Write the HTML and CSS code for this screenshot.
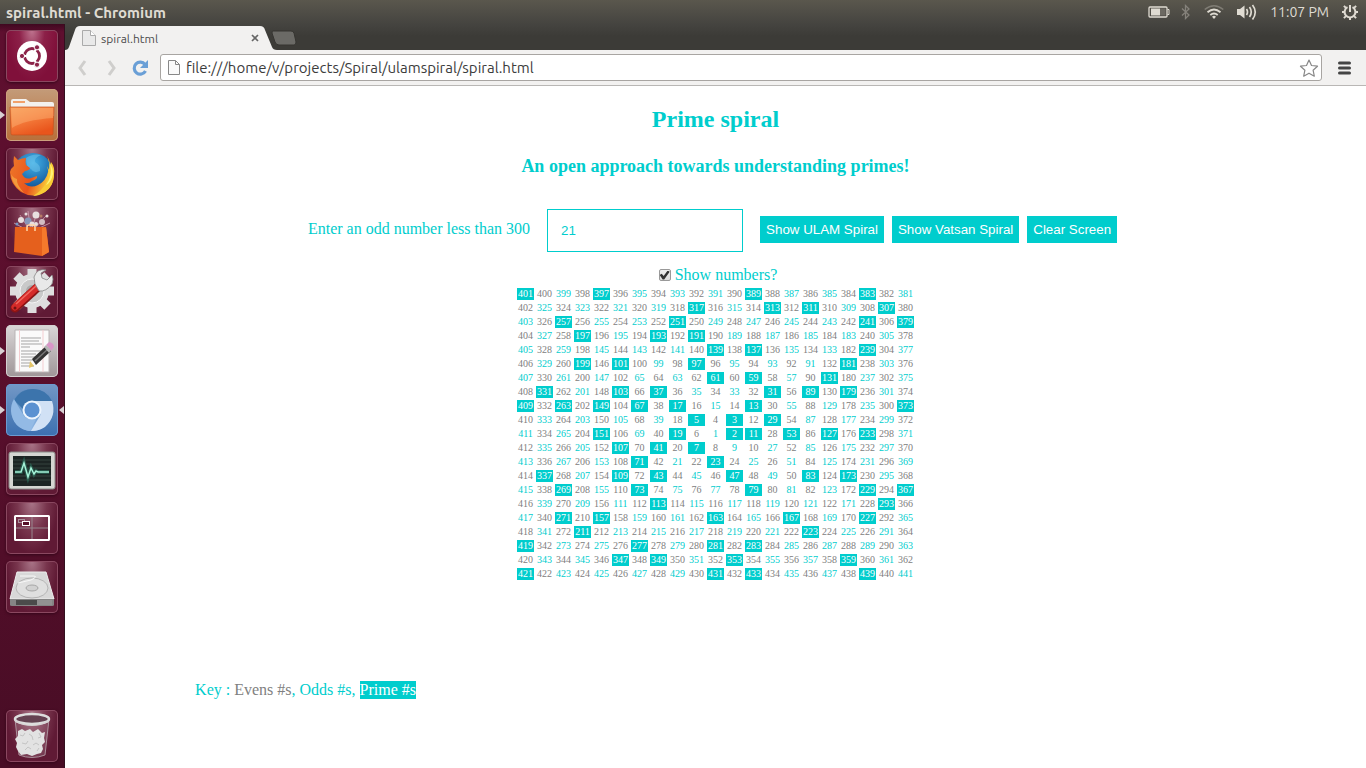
FILE: index.html
```
<!DOCTYPE html>
<html lang="en">
<head>
<meta charset="utf-8">
<title>spiral.html - Chromium</title>
<link rel="stylesheet" href="styles.css">
</head>
<body class="desktop">
<header class="panel">
  <span class="panel-title">spiral.html - Chromium</span>
  <div class="indicators">
    <svg class="battery" width="22" height="14" viewBox="0 0 22 14"><rect x="1" y="2" width="18" height="10" rx="1" fill="none" stroke="#dfdbd2" stroke-width="1.3"/><rect x="3" y="3.5" width="9" height="7" fill="#dfdbd2"/><rect x="12" y="3.5" width="5.5" height="7" fill="#6c6962"/><path d="M19.5 4.5h1.5v5h-1.5" fill="none" stroke="#dfdbd2"/></svg>
    <svg class="bluetooth" width="10" height="16" viewBox="0 0 10 16"><path d="M1 4.5l7 6.5-3.500 3.500V1.500L8 5 1 11.500" fill="none" stroke="#85827b" stroke-width="1.300"/></svg>
    <svg class="wifi" width="20" height="16" viewBox="0 0 20 16"><path d="M.7 5.500Q10-2 19.300 5.500" fill="none" stroke="#7f7c74" stroke-width="1.600"/><path d="M3.500 8.300Q10 2.800 16.500 8.300M6.300 11Q10 8 13.700 11" fill="none" stroke="#dfdbd2" stroke-width="1.800"/><path d="M8 12.700Q10 11 12 12.700L10 15z" fill="#dfdbd2"/></svg>
    <svg class="sound" width="20" height="18" viewBox="0 0 20 18"><path d="M0 6h3l4.500-3.500v13L3 12H0z" fill="#dfdbd2"/><path d="M9.500 6Q11.500 9 9.500 12M12.500 4Q16 9 12.500 14M15.500 2Q21 9 15.500 16.500" fill="none" stroke="#dfdbd2" stroke-width="1.700"/></svg>
    <span class="clock">11:07 PM</span>
    <svg class="power" width="16" height="16" viewBox="0 0 16 16"><path d="M5.500 3.200A5.400 5.400 0 1 0 10.500 3.200" fill="none" stroke="#dfdbd2" stroke-width="2"/><path d="M8 1v7M1.900 1.900l2 2M14.100 1.900l-2 2M0 8h3M13 8h3M1.900 14.100l2-2M14.100 14.100l-2-2M8 13v3" stroke="#dfdbd2" stroke-width="2"/></svg>
  </div>
</header>
<div class="workspace">
<svg class="defs" width="0" height="0" aria-hidden="true"><defs>
  <linearGradient id="orange" x2="0.500" y2="1"><stop stop-color="#f79a55"/><stop offset=".5" stop-color="#f47c3c"/><stop offset="1" stop-color="#e9551c"/></linearGradient>
  <radialGradient id="globe" cx=".5" cy=".25" r=".8"><stop stop-color="#45b3e8"/><stop offset=".6" stop-color="#1c6bad"/><stop offset="1" stop-color="#123a78"/></radialGradient>
  <linearGradient id="fox" x2="1" y2="0.300"><stop stop-color="#ee7a2a"/><stop offset=".6" stop-color="#e9541c"/><stop offset="1" stop-color="#fbd23c"/></linearGradient>
  <linearGradient id="chrome" x2="0" y2="1"><stop stop-color="#4b80b5"/><stop offset="1" stop-color="#91b8e6"/></linearGradient>
</defs></svg>
<nav class="launcher" aria-label="Launcher">
  <button class="tile tile-home" aria-label="Dash"><svg viewBox="0 0 52 52"><circle cx="26" cy="26" r="15" fill="#fff"/><circle cx="26" cy="26" r="7.500" fill="none" stroke="#8c2349" stroke-width="2.800"/><path d="M26 26L16 26M26 26L31 17.300M26 26L31 34.700" stroke="#fff" stroke-width="2"/><circle cx="26" cy="26" r="5.500" fill="#fff"/><g fill="#8c2349" stroke="#fff" stroke-width="1"><circle cx="16" cy="26" r="2.600"/><circle cx="31" cy="17.300" r="2.600"/><circle cx="31" cy="34.700" r="2.600"/></g></svg></button>
  <button class="tile tile-files running" aria-label="Files"><svg viewBox="0 0 52 52"><path d="M5 12q0-2 2-2h13l4 3h22q2 0 2 2v12H5z" fill="#f3f1ee"/><path d="M7 12h12v2H7z" fill="#f1a16b"/><path d="M4 18h44l-1 27q0 1-2 1H7q-2 0-2-1z" fill="url(#orange)" stroke="#c4501c" stroke-width=".7"/><path d="M5 19h42v10Q18 31 6 39z" fill="#ffc68a" opacity=".35"/></svg></button>
  <button class="tile" aria-label="Firefox"><svg viewBox="0 0 52 52"><circle cx="27" cy="25" r="20" fill="url(#globe)"/><path d="M20 10q7-5 15-3-7 3-6 7 6 3 5 9-6 3-9-2-5-1-5-11" fill="#72c6eb" opacity=".5"/><path d="M8 8l4 4q4-2 8-2-1 4 0 7l4 3q0 2-5 3l-3 3q3 6 9 4l6-2q1 3-5 5-3 3-8 2 6 6 14 2 8-4 10-13l6-2q1 15-9 22-12 7-24 0Q4 36 4 24q1-4 4-6-1-5 0-10z" fill="url(#fox)"/><path d="M41 8q3 4 3 9l1-3q4 5 3 12 0 12-9 18-6 4-12 4 10-6 13-13 4-9 1-17l2 4q1-8-2-14z" fill="#f9cb35"/><path d="M44 16q3 12-4 21 5-2 7-11 0-6-3-10z" fill="#fff176"/><path d="M5 26q1 12 13 19-8-9-7-14-4-1-6-5z" fill="#f39a3d"/></svg></button>
  <button class="tile" aria-label="Software Center"><svg viewBox="0 0 52 52"><g stroke="#d6a3b5" stroke-width=".8"><path d="M25 25L8 16M25 25L14 8M25 25L22 4M25 25L31 5M25 25L40 9M25 25L44 16"/></g><g fill="#e8dfdf"><circle cx="15" cy="13" r="3"/><circle cx="22" cy="14" r="3.500" fill="#8797b8"/><circle cx="30" cy="8" r="3.500"/><circle cx="36" cy="15" r="3" fill="#d3bdc3"/><circle cx="41" cy="9" r="1.500"/><circle cx="26" cy="17" r="2.500"/><circle cx="20" cy="7" r="1.500"/><circle cx="11" cy="17" r="1.500" fill="#7798c4"/><circle cx="30" cy="17" r="2"/><circle cx="35" cy="9" r="1.500" fill="#b67a65"/></g><path d="M9 20l31 0 3 25-7 4-28-4z" fill="#e5601d"/><path d="M40 20l3 25-7 4 0-28z" fill="#f4792c"/><path d="M21 24v-4q0-2 2-2h4q2 0 2 2v4" fill="none" stroke="#ffd6a8" stroke-width="1.500"/></svg></button>
  <button class="tile" aria-label="System Settings"><svg viewBox="0 0 52 52"><g fill="#dedede"><circle cx="26" cy="25" r="17"/><g stroke="#dedede" stroke-width="9"><path d="M26 3v44M4 25h44M10.500 9.500l31 31M41.500 9.500l-31 31"/></g></g><circle cx="26" cy="25" r="12" fill="#c9c9c9" stroke="#f3f3f3"/><circle cx="26" cy="25" r="6" fill="#aaa"/><path d="M9 42L33 20" stroke="#8d1414" stroke-width="9" stroke-linecap="round"/><path d="M9 41L32 20" stroke="#d52b29" stroke-width="7" stroke-linecap="round"/><path d="M10 38L30 20" stroke="#f26a60" stroke-width="1.500"/><path d="M29 18l4 7q7 1 13-7 2-5 0-9l-5 5-5-2-1-5 5-3q-9-2-12 7z" fill="#e9e9e9" stroke="#888" stroke-width=".8"/><circle cx="9" cy="42" r="1.500" fill="#741212"/></svg></button>
  <button class="tile tile-editor running" aria-label="Text Editor"><svg viewBox="0 0 52 52"><path d="M9 5h34v42H9z" fill="#fafafa" stroke="#b9b4b5"/><path d="M13.500 5v42M37 5v42" stroke="#f4cdd0"/><path d="M15 13h20M15 16h18M15 19h21M15 22h9M15 26h20M15 29h15M15 32h17M15 35h13M15 38h10M15 41h13" stroke="#a5a5a5"/><path d="M24 36l4 5-5 2z" fill="#e3c568"/><path d="M26 34L40 21l5 5-15 14z" fill="#343434"/><path d="M29 36L42 24" stroke="#777" stroke-width="1.500"/><path d="M40 20l3-3q5 1 5 5l-3 4z" fill="#d996c7"/><path d="M38 22l2-2 5 5-2 3z" fill="#b5b5b5"/></svg></button>
  <button class="tile tile-chromium running focused" aria-label="Chromium"><svg viewBox="0 0 52 52"><circle cx="26" cy="26" r="21" fill="url(#chrome)"/><path d="M8 16Q15 5 27 5q13 0 19 12H26q-7 0-9 8z" fill="#3c74ac"/><path d="M26 17h20q5 15-7 26-6 4-14 4l10-17z" fill="#d1e1f5"/><path d="M8 15l10 17q4 4 12 3l-6 12Q7 45 5 27q0-7 3-12z" fill="#93bae5"/><circle cx="26" cy="26" r="9.500" fill="#eef5fd"/><circle cx="26" cy="26" r="7.500" fill="#5b91d1"/></svg></button>
  <button class="tile" aria-label="System Monitor"><svg viewBox="0 0 52 52"><rect x="3" y="9" width="46" height="37" rx="2" fill="#d5d6d2" stroke="#8a8b88"/><rect x="7" y="13" width="38" height="30" fill="#1c2423"/><path d="M7 17h38M7 21h38M7 25h38M7 33h38M7 37h38" stroke="#35423e"/><path d="M9 29h6l3-9 4 14 3-9 3 6 2-3 2 1h11" fill="none" stroke="#2b725d" stroke-width="4" opacity=".6"/><path d="M9 29h6l3-9 4 14 3-9 3 6 2-3 2 1h11" fill="none" stroke="#a4f2d7" stroke-width="1.500"/></svg></button>
  <button class="tile" aria-label="Workspace Switcher"><svg viewBox="0 0 52 52"><path d="M26 14v24M9 26h34" stroke="#97858d"/><rect x="9" y="14" width="34" height="24" rx=".5" fill="none" stroke="#fff" stroke-width="2"/><rect x="12.500" y="17.500" width="6" height="3" fill="none" stroke="#a8929d"/><rect x="16.500" y="19.500" width="7" height="4" fill="#551129" stroke="#fff"/></svg></button>
  <button class="tile" aria-label="Disk"><svg viewBox="0 0 52 52"><path d="M11 11h29l8 27H4z" fill="#d8d8d8" stroke="#eee"/><path d="M4 38h44v6q0 1-2 1H6q-2 0-2-1z" fill="#858585"/><path d="M10 39h33v5H10z" fill="#4b4b4b"/><path d="M31 39h15v5H31z" fill="#929292"/><ellipse cx="26" cy="27" rx="16" ry="10" fill="#dfdfdf" stroke="#aaa" stroke-width=".8"/><ellipse cx="26" cy="27" rx="6" ry="3" fill="#d1d1d1" stroke="#999" stroke-width=".8"/><path d="M14 15h13q6 0-2 4l-13 3" fill="none" stroke="#f7f7f7"/></svg></button>
  <button class="tile tile-trash" aria-label="Trash"><svg viewBox="0 0 52 52"><path d="M9 9l4 36q13 5 26 0l4-36" fill="#dfd5da" fill-opacity=".16" stroke="#b9a7af" stroke-width=".8"/><path d="M12 21l4-2 3 2 5-2 3 3 5-3 4 4 3-1-1 6 1 4-3 3 1 4-2 4-4 1-5 2-5-2-6 1-3-4-2-4 1-4-2-4 3-3z" fill="#e2e2e2"/><path d="M14 25l3 1 2-3M23 24l3 2 1 4M33 23l2 4-3 1M16 33l4 1 2-3M27 35l3-2 3 2M19 40l3-3 3 2M31 41l2-3" fill="none" stroke="#c4c4c4"/><ellipse cx="26" cy="9" rx="17" ry="5" fill="#654252" stroke="#ddd" stroke-width="2.500"/><path d="M9 10q17 10 34 0v2q-17 8-34 0z" fill="#d6d3d4"/></svg></button>
</nav>
<section class="browser">
  <div class="tabstrip">
    <div class="tab">
      <svg class="tab-shape" viewBox="0 0 212 24" preserveAspectRatio="none"><path d="M0 24Q3 24 4 21L10 4Q11 0 15 0H195Q199 0 200 4L207 21Q208 24 212 24z" fill="#f2f1f0"/></svg>
      <svg class="page-icon" width="14" height="16" viewBox="0 0 14 16"><path d="M.5.5h8l5 5v10H.5z" fill="#e9e9e9" stroke="#aaa"/><path d="M8.500.5v5h5" fill="#fff" stroke="#aaa"/></svg>
      <span class="tab-title">spiral.html</span>
      <button class="tab-close" aria-label="Close tab"><svg width="8" height="8" viewBox="0 0 8 8"><path d="M1 1l6 6M7 1L1 7" stroke="#666" stroke-width="1.700"/></svg></button>
    </div>
    <button class="new-tab" aria-label="New tab"><svg width="26" height="16" viewBox="0 0 26 16"><path d="M2 1h18q2 0 3 2l2 9q0 3-2 3H8q-3 0-4-3L1 3q0-2 1-2z" fill="#6b6a66" stroke="#363531"/></svg></button>
  </div>
  <div class="toolbar">
    <button class="tool" aria-label="Back"><svg width="10" height="18" viewBox="0 0 10 18"><path d="M8 2L3 9l5 7" fill="none" stroke="#cfcecc" stroke-width="3"/></svg></button>
    <button class="tool" aria-label="Forward"><svg width="10" height="18" viewBox="0 0 10 18"><path d="M2 2l5 7-5 7" fill="none" stroke="#cfcecc" stroke-width="3"/></svg></button>
    <button class="tool" aria-label="Reload"><svg width="18" height="18" viewBox="0 0 18 18"><path d="M14 5.500A6 6 0 1 0 14.500 12" fill="none" stroke="#6a9fd6" stroke-width="3.200"/><path d="M17 1v8H9z" fill="#6a9fd6"/></svg></button>
    <div class="omnibox">
      <svg class="page-icon" width="12" height="15" viewBox="0 0 12 15"><path d="M.5.500h7l4 4v10H.500z" fill="#fafafa" stroke="#888"/><path d="M7.500.500v4h4" fill="none" stroke="#888"/></svg>
      <input class="url" type="text" aria-label="Address" value="file:///home/v/projects/Spiral/ulamspiral/spiral.html">
      <svg width="20" height="18" viewBox="0 0 20 18"><path d="M10 1l2.500 5.500 6 .7-4.400 4 1.200 6-5.300-3-5.300 3 1.200-6-4.400-4 6-.7z" fill="#fff" stroke="#888" stroke-width="1.200" stroke-linejoin="round"/></svg>
    </div>
    <button class="menu" aria-label="Menu"><svg width="13" height="14" viewBox="0 0 13 14"><path d="M1.500 2h10M1.500 7h10M1.500 12h10" stroke="#444" stroke-width="3" stroke-linecap="round"/></svg></button>
  </div>
  <main class="page">
    <h2 class="title">Prime spiral</h2>
    <h3 class="subtitle">An open approach towards understanding primes!</h3>
    <form class="controls">
      <label class="prompt" for="limit">Enter an odd number less than 300</label>
      <input class="limit" id="limit" type="text" value="21">
      <div class="actions">
        <button class="action" type="button">Show ULAM Spiral</button>
        <button class="action" type="button">Show Vatsan Spiral</button>
        <button class="action" type="button">Clear Screen</button>
      </div>
    </form>
    <label class="toggle"><input class="check" type="checkbox" checked>Show numbers?</label>
    <table class="spiral"><tbody id="spiral"></tbody></table>
    <p class="key">Key : <span class="key-even">Evens #s</span>, Odds #s, <span class="key-prime">Prime #s</span></p>
  </main>
</section>
</div>
<script src="spiral.js"></script>
</body>
</html>
```
FILE: styles.css
```
* { box-sizing: border-box; }
button { font-family: "Liberation Sans", Arial, sans-serif; border: 0; padding: 0; background: none; }
svg { display: block; }

.desktop {
  margin: 0;
  height: 100vh;
  display: flex;
  flex-direction: column;
  overflow: hidden;
  background: #3c3b37;
  font-family: Ubuntu, "Open Sans", sans-serif;
}
.panel {
  flex: none;
  height: 24px;
  padding: 0 8px 0 6px;
  display: flex;
  align-items: center;
  justify-content: space-between;
  background: linear-gradient(#5a574d, #454440);
  color: #dfdbd2;
}
.panel-title { font-size: 15px; font-weight: 700; }
.indicators { display: flex; align-items: center; gap: 13px; }
.battery { margin-right: -2px; }
.clock { font-size: 14px; }

.workspace { flex: 1; min-height: 0; display: flex; }
.defs { position: absolute; }
.launcher {
  flex: none;
  width: 65px;
  padding: 6px 6px;
  display: flex;
  flex-direction: column;
  gap: 7px;
  background: linear-gradient(#3f0820, #5e0f2f 8px, #5b0f2d 40%, #480d25);
  border-right: 1px solid #33101f;
}
.tile {
  position: relative;
  flex: none;
  width: 52px;
  height: 52px;
  border-radius: 5px;
  background: radial-gradient(ellipse at 50% 0, #a97588, #78354d 40%, #601a35 70%);
  box-shadow: inset 0 0 0 1px #8a4860, 0 1px 3px #35061a;
}
.tile-home { background: radial-gradient(ellipse at 50% 0, #bf7590, #8c2048 35%, #80103a 70%); }
.tile-files { background: linear-gradient(#c39b79, #b96f39); box-shadow: inset 0 0 0 1px #cda17e; }
.tile-editor { background: linear-gradient(#dad6d7, #9f9698); box-shadow: inset 0 0 0 1px #d5d0d1; }
.tile-chromium { background: linear-gradient(#7398c6, #3c70b0); box-shadow: inset 0 0 0 1px #6c9ad0; }
.tile-trash { margin-top: auto; }
.running::before, .focused::after {
  content: "";
  position: absolute;
  top: 22px;
  left: -6px;
  border: 4px solid transparent;
  border-left: 5px solid #d8d0d3;
  border-right: 0;
}
.focused::after {
  left: auto;
  right: -6px;
  border-left: 0;
  border-right: 5px solid #d8d0d3;
}

.browser { flex: 1; min-width: 0; display: flex; flex-direction: column; }
.tabstrip { flex: none; height: 26px; padding-top: 2px; display: flex; background: linear-gradient(#454440, #3c3b37 12px); }
.tab { position: relative; width: 212px; height: 24px; padding: 0 18px 0 17px; display: flex; align-items: center; gap: 5px; }
.tab-shape { position: absolute; inset: 0; width: 100%; height: 100%; }
.tab .page-icon, .tab-title, .tab-close { position: relative; }
.tab-title { flex: 1; font-size: 12px; color: #4c4c4c; }
.new-tab { align-self: flex-start; margin: 4px 0 0 -6px; }
.toolbar {
  flex: none;
  height: 36px;
  padding: 0 15px 0 12px;
  display: flex;
  align-items: center;
  gap: 20px;
  background: #f2f1f0;
  border-bottom: 1px solid #b9b7b5;
}
.tool + .tool + .tool { margin-left: -6px; }
.omnibox {
  flex: 1;
  height: 27px;
  margin-left: -9px;
  margin-right: -4px;
  padding: 0 2px 0 7px;
  display: flex;
  align-items: center;
  gap: 6px;
  background: #fff;
  border: 1px solid #a8a5a2;
  border-radius: 3px;
}
.url { flex: 1; min-width: 0; border: 0; padding: 0; background: none; color: #3c3c3c; font: 15px Ubuntu, "Open Sans", sans-serif; }

.page {
  flex: 1;
  min-height: 0;
  padding-top: 20px;
  display: flex;
  flex-direction: column;
  align-items: center;
  background: #fff;
  color: #00cdcd;
  font: 16px/18px "Liberation Serif", "Times New Roman", serif;
}
.title { margin: 0 0 22px; font-size: 24px; line-height: 27px; }
.subtitle { margin: 0 0 32px; font-size: 18px; line-height: 22px; }
.controls { padding-right: 6px; display: flex; align-items: center; gap: 17px; }
.prompt { padding-bottom: 4px; }
.limit {
  width: 196px;
  height: 43px;
  padding: 0 13px;
  border: 1px solid #00cdcd;
  background: #fff;
  color: #00cdcd;
  font-family: "Liberation Sans", Arial, sans-serif;
}
.actions { padding-bottom: 2px; display: flex; gap: 8px; }
.action { height: 27px; padding: 0 6px; background: #00cdcd; color: #fff; }
.toggle { margin: 14px 0 2px; padding-left: 5px; display: flex; align-items: center; gap: 4px; }
.check {
  appearance: none;
  width: 12px;
  height: 12px;
  margin: 0;
  display: grid;
  place-items: center;
  border: 1px solid #999;
  border-radius: 2px;
  background: linear-gradient(#eee, #ddd);
}
.check::after { content: ""; width: 10px; height: 9px; background: #333; clip-path: polygon(0 50%, 20% 35%, 40% 60%, 80% 0, 100% 15%, 45% 100%, 30% 100%); }
.spiral { border-spacing: 2px; font-size: 10px; line-height: 10px; text-align: center; }
.spiral td { width: 17px; height: 12px; padding: 1px; }
.even { color: #808080; }
.prime { background: #00cdcd; color: #fff; }
.key { align-self: flex-start; margin: 99px 0 0 10%; }
.key-even { color: #808080; }
.key-prime { display: inline-block; background: #00cdcd; color: #fff; }
```
FILE: spiral.js
```
function isPrime(n) {
  if (n < 2) return false;
  for (let d = 2; d * d <= n; d++) {
    if (n % d === 0) return false;
  }
  return true;
}

// Walks right, up, left, down from the centre with growing runs.
function buildSpiral(size) {
  const grid = Array.from({ length: size }, () => new Array(size));
  const steps = [[1, 0], [0, -1], [-1, 0], [0, 1]];
  let x = (size - 1) / 2;
  let y = x;
  let n = 1;
  for (let run = 0; n <= size * size; run++) {
    const [dx, dy] = steps[run % 4];
    const length = Math.floor(run / 2) + 1;
    for (let i = 0; i < length && n <= size * size; i++) {
      grid[y][x] = n++;
      x += dx;
      y += dy;
    }
  }
  return grid;
}

const body = document.getElementById("spiral");
const size = Number(document.getElementById("limit").value);
for (const numbers of buildSpiral(size)) {
  const row = body.insertRow();
  for (const n of numbers) {
    const cell = row.insertCell();
    cell.textContent = n;
    cell.className = isPrime(n) ? "prime" : n % 2 ? "odd" : "even";
  }
}
```
